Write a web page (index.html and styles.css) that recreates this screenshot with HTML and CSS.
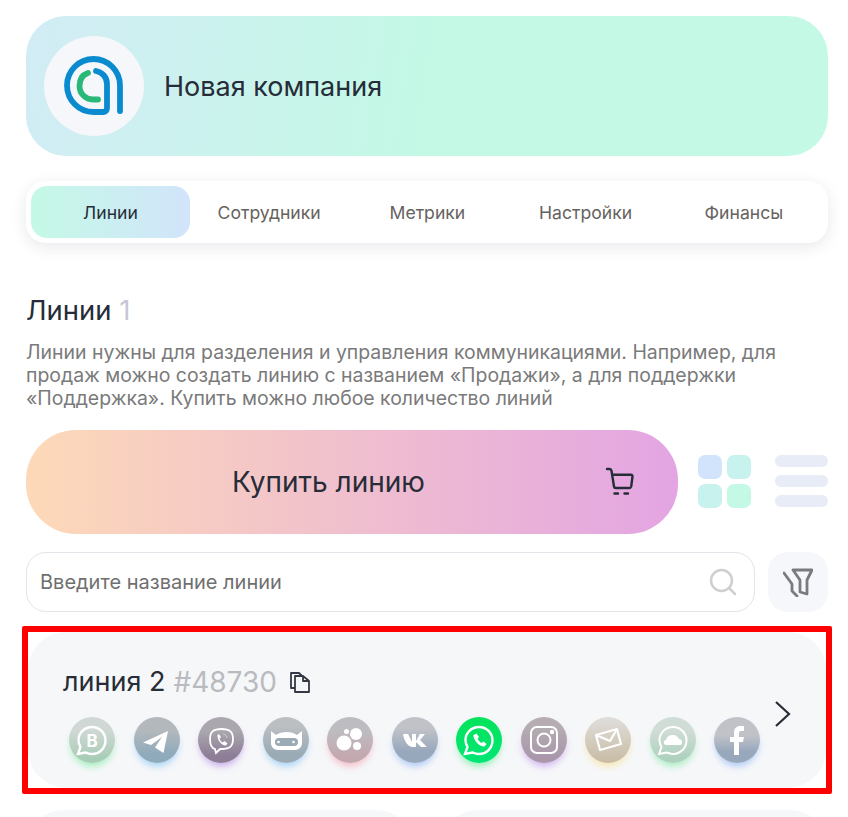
FILE: index.html
```html
<!DOCTYPE html>
<html lang="ru">
<head>
    <meta charset="UTF-8">
    <meta name="viewport" content="width=device-width, initial-scale=1.0">
    <title>Линии</title>
    <link rel="stylesheet" href="styles.css">
</head>
<body>

    <header class="company">
        <div class="company-logo">
            <svg width="60" height="60" viewBox="0 0 60 60" fill="none" stroke-linecap="round">
                <path d="M56 55V29.500A26.500 26.500 0 0 0 3 29.500A26.500 26.500 0 0 0 29.500 56H39C41.500 56 43 54.500 43 52V28C43 21 38 16 32 15" stroke="#0a8bcf" stroke-width="5.800"/>
                <path d="M24 17C18 19 15.500 24 15.500 30C15.500 38 22 43.500 29 43.500H34" stroke="#28b877" stroke-width="5.800"/>
            </svg>
        </div>
        <div class="company-name">Новая компания</div>
    </header>

    <nav class="tabs">
        <a class="tab active">Линии</a>
        <a class="tab">Сотрудники</a>
        <a class="tab">Метрики</a>
        <a class="tab">Настройки</a>
        <a class="tab">Финансы</a>
    </nav>

    <h1 class="title">Линии <span class="count">1</span></h1>
    <p class="intro">Линии нужны для разделения и управления коммуникациями. Например, для продаж можно создать линию с названием «Продажи», а для поддержки «Поддержка». Купить можно любое количество линий</p>

    <div class="actions">
        <button class="buy">
            <span>Купить линию</span>
            <svg class="cart" width="30" height="30" viewBox="0 0 30 30" fill="none" stroke="#262c38" stroke-width="2.400" stroke-linecap="round" stroke-linejoin="round">
                <path d="M2 2H4.500C5.500 2 6.300 2.700 6.500 3.700L9 19.500C9.100 20.300 9.800 21 10.700 21H24.500C25.400 21 26 20.300 26.200 19.500L27.500 9.500C27.600 8.500 27 7.700 26 7.700H7"/>
                <path d="M9.500 26.500H13M19.500 26.500H23"/>
            </svg>
        </button>
        <div class="view-grid">
            <i></i><i></i><i></i><i></i>
        </div>
        <div class="view-list">
            <i></i><i></i><i></i>
        </div>
    </div>

    <div class="search-row">
        <div class="search">
            <span class="search-text">Введите название линии</span>
            <svg width="28" height="28" viewBox="0 0 28 28" fill="none" stroke="#cfcfd2" stroke-width="2.500" stroke-linecap="round">
                <circle cx="12.500" cy="12.500" r="10.500"/>
                <path d="M21 21L26 26"/>
            </svg>
        </div>
        <div class="filter">
            <svg width="30" height="30" viewBox="0 0 30 30" fill="none" stroke="#7b7b7d" stroke-width="2.800" stroke-linejoin="round" stroke-linecap="round">
                <path d="M10 3H29L24 13V27L17 25V13Z"/>
                <path d="M1 6L9 17V24L14 29"/>
            </svg>
        </div>
    </div>

    <div class="highlight">
        <section class="line-card">
            <div class="line-body">
                <div class="line-head">
                    <span class="line-name">линия 2</span>
                    <span class="line-id">#48730</span>
                    <svg width="22" height="22" viewBox="0 0 22 22" fill="none" stroke="#333844" stroke-width="1.800" stroke-linejoin="round">
                        <path d="M6 17H2V2H10L13 5"/>
                        <path d="M6 5H14L20 10V21H6Z"/>
                        <path d="M14 5V10H20"/>
                    </svg>
                </div>
                <div class="channels">
                    <div class="ch ch-wab">
                        <svg viewBox="0 0 46 46" fill="none" stroke="#fff" stroke-width="2.400"><path d="M9 37L11.500 30C10 27.500 9.500 25.500 9.500 23C9.500 16 15.500 10 23 10C30.500 10 36.500 16 36.500 23.500C36.500 31 30.500 37 23 37C20.500 37 18.500 36 16.500 35.500Z"/><text x="23" y="29.500" class="ch-letter">B</text></svg>
                    </div>
                    <div class="ch ch-tg">
                        <svg viewBox="0 0 46 46" fill="#fff"><path d="M34 14L9 25.500L17 28L28 20L21 30.500L29.500 36Z"/></svg>
                    </div>
                    <div class="ch ch-vb">
                        <svg viewBox="0 0 46 46" fill="none" stroke="#fff" stroke-width="1.800"><path d="M17 32C13 31 12 28 12 22C12 15 15 12 23.500 12C32 12 35 15 35 22C35 29 32 32 23.500 32H22L18 36Z"/><path d="M19.500 18C19 23 24 29 28 28.500L29.500 26.500L26.500 24L24.500 25.500C23 24.500 22 23 21.500 21.500L23 20L21 17Z" fill="#fff" stroke="none"/><path d="M25 17C27 17 29 19 29 21" stroke-width="0.800" opacity="0.6"/></svg>
                    </div>
                    <div class="ch ch-bot">
                        <svg viewBox="0 0 46 46" fill="#fff"><path d="M8 14L13 18C16 16 19 15 23.500 15C28 15 31 16 34 18L39 14V26C39 30 36 33 32 33H15C11 33 8 30 8 26Z"/><rect x="12" y="21" width="23" height="8" rx="4" fill="#9aabb6"/><circle cx="15.500" cy="25" r="1.300"/><circle cx="30.500" cy="25" r="1.300"/></svg>
                    </div>
                    <div class="ch ch-ok">
                        <svg viewBox="0 0 46 46" fill="#fff"><circle cx="17" cy="26" r="7.500"/><circle cx="29" cy="17" r="6"/><circle cx="19.500" cy="14.500" r="2.500"/><circle cx="30" cy="29" r="4"/></svg>
                    </div>
                    <div class="ch ch-vk">
                        <svg viewBox="0 0 46 46" fill="#fff"><path d="M11 17H16L20 25V17H24V24L28 17H33L28 23L35 30H29L24 25V30H21C16 30 12 24 11 17Z"/></svg>
                    </div>
                    <div class="ch ch-wa">
                        <svg viewBox="0 0 46 46" fill="none" stroke="#fff" stroke-width="2.400"><path d="M9 37L11.500 30C10 27.500 9.500 25.500 9.500 23C9.500 16 15.500 10 23 10C30.500 10 36.500 16 36.500 23.500C36.500 31 30.500 37 23 37C20.500 37 18.500 36 16.500 35.500Z"/><path d="M17.500 18C17 23 23.500 30 28.500 29.500L30.500 27L27.500 24.500L25.500 26C24 25 22.500 23.500 21.500 22L23 20L20.500 16.500Z" fill="#fff" stroke="none"/></svg>
                    </div>
                    <div class="ch ch-ig">
                        <svg viewBox="0 0 46 46" fill="none" stroke="#fff" stroke-width="2"><rect x="10" y="10" width="26" height="26" rx="6"/><circle cx="23" cy="23" r="6.500"/><circle cx="31" cy="15" r="1.200" fill="#fff"/></svg>
                    </div>
                    <div class="ch ch-mail">
                        <svg viewBox="0 0 46 46" fill="none" stroke="#fff" stroke-width="2.200" stroke-linejoin="round"><path d="M11 18L32 12L36 27L15 33Z"/><path d="M11 18L25 24L32 12"/></svg>
                    </div>
                    <div class="ch ch-wc">
                        <svg viewBox="0 0 46 46" fill="none" stroke="#fff" stroke-width="2"><path d="M9 37L11.500 30C10 27.500 9.500 25.500 9.500 23C9.500 16 15.500 10 23 10C30.500 10 36.500 16 36.500 23.500C36.500 31 30.500 37 23 37C20.500 37 18.500 36 16.500 35.500Z"/><path d="M16 28C13 28 13 23 16 23C17 19 20 18 23 18C26 18 28 20 29 22C33 22 33 28 30 28Z" fill="#fff" stroke="none"/></svg>
                    </div>
                    <div class="ch ch-fb">
                        <svg viewBox="0 0 46 46" fill="#fff"><path d="M20 38V25H16V20H20V16C20 11 23 9 26 9H30V14H27C25.500 14 25 15 25 16V20H30L29 25H25V38Z"/></svg>
                    </div>
                </div>
            </div>
            <svg class="chevron" width="18" height="28" viewBox="0 0 18 28" fill="none" stroke="#262c38" stroke-width="2.200"><path d="M2 2L15 14L2 26"/></svg>
        </section>
    </div>

    <div class="more">
        <div class="more-card"></div>
        <div class="more-card"></div>
    </div>

</body>
</html>
```

FILE: styles.css
```css
html, body {
    height: 817px;
    overflow: hidden;
}
body {
    margin: 0;
    padding: 16px 20px 0 26px;
    box-sizing: border-box;
    font-family: Inter, "Liberation Sans", sans-serif;
    color: #262c38;
    background: #fff;
}
.company {
    display: flex;
    align-items: center;
    gap: 20px;
    height: 140px;
    padding-left: 18px;
    border-radius: 40px;
    background: linear-gradient(100deg, #d2ecf5 0%, #c4f9e6 50%, #c4f9e6 100%);
}
.company-logo {
    width: 100px;
    height: 100px;
    border-radius: 50%;
    background: #f5f7fa;
    display: flex;
    align-items: center;
    justify-content: center;
}
.company-name {
    font-size: 27px;
}
.tabs {
    display: flex;
    margin-top: 25px;
    height: 62px;
    padding: 5px;
    box-sizing: border-box;
    border-radius: 20px;
    background: #fff;
    box-shadow: 0 4px 16px rgba(30, 40, 60, 0.1);
}
.tab {
    flex: 1;
    display: flex;
    align-items: center;
    justify-content: center;
    font-size: 17.6px;
    color: #66625f;
    border-radius: 16px;
}
.tab.active {
    flex: 0 0 159px;
    color: #262c38;
    background: linear-gradient(90deg, #c4f9e6, #d2e4fb);
}
.title {
    margin: 51px 0 0;
    font-size: 27.5px;
    line-height: 32px;
    font-weight: 400;
}
.count {
    color: #c6c6d8;
}
.intro {
    margin: 15px 0 0;
    font-size: 19.45px;
    line-height: 23px;
    color: #7a7a7a;
}
.actions {
    display: flex;
    align-items: center;
    margin-top: 20px;
}
.buy {
    position: relative;
    width: 652px;
    height: 104px;
    padding: 0 47px 0 0;
    border: none;
    border-radius: 50px;
    background: linear-gradient(90deg, #fdd9b8, #e3a5e3);
    font-family: inherit;
    font-size: 28px;
    color: #262c38;
}
.cart {
    position: absolute;
    right: 43px;
    top: 37px;
}
.view-grid {
    display: grid;
    grid-template-columns: 24px 24px;
    gap: 5px;
    margin: -2px 0 0 20px;
}
.view-grid i {
    height: 24px;
    border-radius: 7px;
    background: #c8f2ed;
}
.view-grid i:first-child {
    background: #d2e4fb;
}
.view-grid i:last-child {
    background: #c4f9e6;
}
.view-list {
    display: flex;
    flex-direction: column;
    gap: 8px;
    width: 53px;
    margin: -2px 0 0 24px;
}
.view-list i {
    height: 12px;
    border-radius: 6px;
    background: #e8ecf7;
}
.search-row {
    display: flex;
    gap: 13px;
    margin-top: 18px;
}
.search {
    flex: 1;
    display: flex;
    align-items: center;
    justify-content: space-between;
    height: 60px;
    padding: 0 17px 0 13px;
    box-sizing: border-box;
    border: 1px solid #e3e3ea;
    border-radius: 20px;
}
.search-text {
    font-size: 20px;
    color: #6f6f6f;
}
.filter {
    width: 60px;
    height: 60px;
    border-radius: 20px;
    background: #f5f7fa;
    display: flex;
    align-items: center;
    justify-content: center;
}
.highlight {
    margin: 14px 0 0 -4px;
    width: 810px;
    height: 168px;
    box-sizing: border-box;
    border: 6px solid #ff0000;
    border-radius: 2px;
}
.line-card {
    display: flex;
    align-items: center;
    justify-content: space-between;
    height: 100%;
    padding: 8px 34px 0 35px;
    box-sizing: border-box;
    border-radius: 38px;
    background: #f6f7f9;
}
.line-head {
    display: flex;
    align-items: center;
    font-size: 27px;
    line-height: 34px;
}
.line-id {
    margin-left: 8px;
    font-size: 28px;
    color: #b9bbc0;
}
.line-head svg {
    margin-left: 12px;
}
.channels {
    display: flex;
    gap: 18.5px;
    margin-top: 18px;
    margin-left: 6px;
}
.ch {
    width: 46px;
    height: 46px;
    border-radius: 50%;
}
.ch svg {
    display: block;
    width: 46px;
    height: 46px;
}
.ch-letter {
    font-family: Inter, "Liberation Sans", sans-serif;
    font-size: 17px;
    font-weight: 700;
    fill: #fff;
    stroke: none;
    text-anchor: middle;
}
.ch-wab {
    background: linear-gradient(#cfd8d4 30%, #a8cdb6 90%);
    box-shadow: 0 5px 7px -2px rgba(110, 235, 150, 0.65);
}
.ch-tg {
    background: linear-gradient(#b3b8bc 30%, #8fabbb 80%);
    box-shadow: 0 5px 7px -2px rgba(120, 190, 245, 0.65);
}
.ch-vb {
    background: linear-gradient(#aaa8ae 30%, #8d7d97 85%);
    box-shadow: 0 5px 7px -2px rgba(170, 120, 225, 0.6);
}
.ch-bot {
    background: linear-gradient(#bbbfc2 20%, #9aabb6 80%);
    box-shadow: 0 5px 7px -2px rgba(120, 190, 245, 0.65);
}
.ch-ok {
    background: linear-gradient(#bdbcc0 30%, #c4a8b0 85%);
    box-shadow: 0 5px 7px -2px rgba(245, 130, 150, 0.5);
}
.ch-vk {
    background: linear-gradient(#c0c2c8 25%, #98a8bc 75%);
    box-shadow: 0 5px 7px -2px rgba(120, 170, 245, 0.6);
}
.ch-wa {
    background: linear-gradient(#06e35a, #00e676);
    box-shadow: 0 5px 7px -2px rgba(60, 235, 120, 0.55);
}
.ch-ig {
    background: linear-gradient(#b5adb1 20%, #aa97ac 85%);
    box-shadow: 0 5px 7px -2px rgba(180, 120, 235, 0.55);
}
.ch-mail {
    background: linear-gradient(#e0dedb, #c8bba4);
    box-shadow: 0 5px 7px -2px rgba(250, 220, 130, 0.65);
}
.ch-wc {
    background: linear-gradient(#d0dcd6 30%, #aed2be 90%);
    box-shadow: 0 5px 7px -2px rgba(120, 235, 160, 0.65);
}
.ch-fb {
    background: linear-gradient(#c0c2c8 40%, #98a8bc 75%);
    box-shadow: 0 5px 7px -2px rgba(120, 170, 245, 0.6);
}
.more {
    display: flex;
    gap: 26px;
    margin-top: 16px;
    height: 6px;
}
.more-card {
    flex: 1;
    height: 100px;
    border-radius: 38px;
    background: #f6f7f9;
}
```
